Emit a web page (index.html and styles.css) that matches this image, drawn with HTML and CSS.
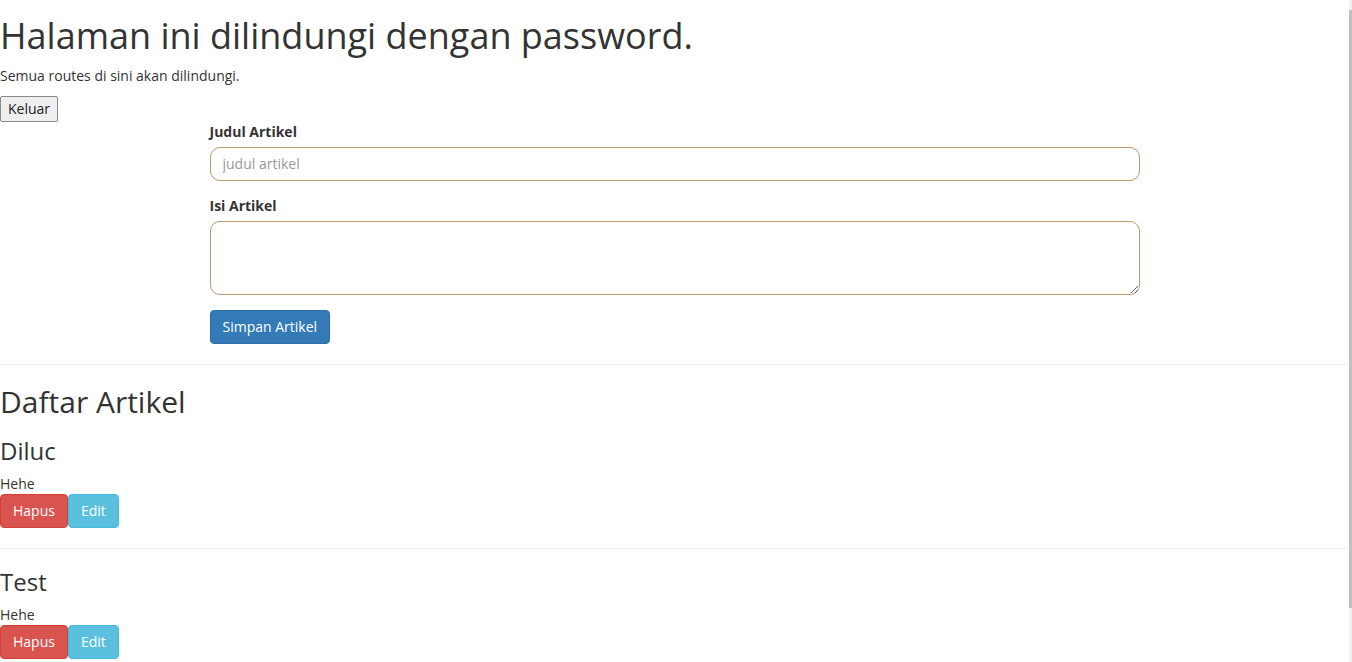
FILE: index.html
```html
<!DOCTYPE html>
<html lang="id">
<head>
<meta charset="utf-8">
<title>Halaman</title>
<link rel="stylesheet" href="styles.css">
</head>
<body>
<h1 class="title">Halaman ini dilindungi dengan password.</h1>
<p class="lead-text">Semua routes di sini akan dilindungi.</p>
<div class="logout-row"><button class="logout" type="button">Keluar</button></div>
<div class="container">
  <form class="article-form">
    <div class="form-group">
      <label class="form-label" for="judul">Judul Artikel</label>
      <input class="form-control" id="judul" type="text" placeholder="judul artikel">
    </div>
    <div class="form-group">
      <label class="form-label" for="isi">Isi Artikel</label>
      <textarea class="form-control textarea" id="isi" rows="3"></textarea>
    </div>
    <button class="btn btn-primary" type="button">Simpan Artikel</button>
  </form>
</div>
<hr class="divider">
<h2 class="list-title">Daftar Artikel</h2>
<div class="article">
  <h3 class="article-title">Diluc</h3>
  <div class="article-body">Hehe</div>
  <div class="actions"><button class="btn btn-danger" type="button">Hapus</button><button class="btn btn-info" type="button">Edit</button></div>
</div>
<hr class="divider">
<div class="article">
  <h3 class="article-title">Test</h3>
  <div class="article-body">Hehe</div>
  <div class="actions"><button class="btn btn-danger" type="button">Hapus</button><button class="btn btn-info" type="button">Edit</button></div>
</div>
<div class="scrollbar"><div class="scroll-thumb"></div></div>
</body>
</html>
```
FILE: styles.css
```css
* { box-sizing: border-box; }
html, body { margin: 0; padding: 0; }
body {
  font-family: "Open Sans", "Liberation Sans", sans-serif;
  font-size: 14px;
  line-height: 20px;
  color: #333;
  background: #fff;
  padding-right: 3px;
}
.title {
  font-size: 36px;
  font-weight: 400;
  line-height: 1.1;
  margin: 16px 0 10px;
}
.lead-text { margin: 0 0 10px; }
.logout-row { display: flex; }
.logout {
  font-family: "Open Sans", "Liberation Sans", sans-serif;
  font-size: 14px;
  color: #222;
  background: #efefef;
  border: 1px solid #8a8a8a;
  border-radius: 2px;
  padding: 1px 7px;
  height: 26px;
  line-height: 20px;
}
.container {
  width: 930px;
  margin: 0 auto;
}
.form-group { margin-bottom: 15px; }
.form-label {
  display: block;
  font-weight: 700;
  margin-bottom: 5px;
}
.form-control {
  display: block;
  width: 100%;
  height: 34px;
  padding: 6px 12px;
  font-family: "Open Sans", "Liberation Sans", sans-serif;
  font-size: 14px;
  line-height: 20px;
  color: #555;
  background: #fff;
  border: 1px solid #b89a6c;
  border-radius: 10px;
}
.form-control::placeholder { color: #999; }
.textarea { height: 74px; resize: vertical; }
.btn {
  display: inline-block;
  padding: 6px 12px;
  font-family: "Open Sans", "Liberation Sans", sans-serif;
  font-size: 14px;
  line-height: 20px;
  height: 34px;
  border: 1px solid transparent;
  border-radius: 4px;
  color: #fff;
  cursor: pointer;
  vertical-align: top;
}
.btn-primary { background: #337ab7; border-color: #2e6da4; }
.btn-danger { background: #d9534f; border-color: #d43f3a; }
.btn-info { background: #5bc0de; border-color: #46b8da; }
.divider {
  margin: 20px 0;
  border: 0;
  border-top: 1px solid #eee;
  height: 0;
}
.list-title {
  font-size: 30px;
  font-weight: 400;
  line-height: 1.1;
  margin: 20px 0 10px;
}
.article-title {
  font-size: 24px;
  font-weight: 400;
  line-height: 1.1;
  margin: 20px 0 10px;
}
.actions { display: flex; }
.scrollbar {
  position: fixed;
  top: 0;
  right: 0;
  width: 3px;
  height: 100%;
  background: #f1f1f1;
  padding-top: 10px;
}
.scroll-thumb {
  width: 3px;
  height: 598px;
  background: #c1c1c1;
}
```
